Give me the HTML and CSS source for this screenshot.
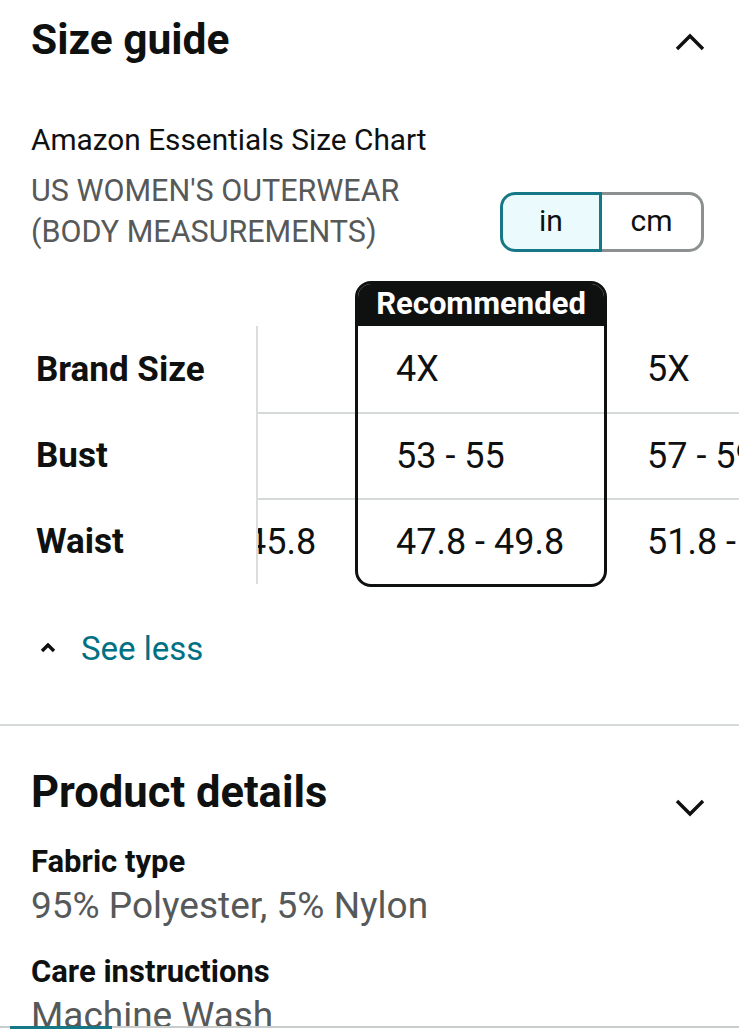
FILE: index.html
```html
<!DOCTYPE html>
<html lang="en">
  <head>
    <meta charset="UTF-8" />
    <meta name="viewport" content="width=device-width, initial-scale=1.0" />
    <title>Size guide</title>
    <link rel="stylesheet" href="styles.css">
  </head>
  <body>
    <section class="panel size-guide">
      <div class="panel-head">
        <h2>Size guide</h2>
        <svg class="chevron" viewBox="0 0 32 20" width="32" height="20">
          <polyline points="3,17 16,4 29,17" />
        </svg>
      </div>

      <div class="chart-title">Amazon Essentials Size Chart</div>
      <div class="chart-meta">
        <div class="chart-type">US WOMEN'S OUTERWEAR<br />(BODY MEASUREMENTS)</div>
        <div class="unit-toggle">
          <button class="unit active">in</button>
          <button class="unit">cm</button>
        </div>
      </div>

      <div class="chart">
        <div class="chart-labels">
          <div class="label-rows">
            <div class="label">Brand Size</div>
            <div class="label">Bust</div>
            <div class="label">Waist</div>
          </div>
        </div>
        <div class="chart-scroll">
          <div class="chart-track">
            <div class="col">
              <div class="col-head"></div>
              <div class="cell"></div>
              <div class="cell"></div>
              <div class="cell">43.8 - 45.8</div>
            </div>
            <div class="col recommended">
              <div class="col-head">Recommended</div>
              <div class="cell">4X</div>
              <div class="cell">53 - 55</div>
              <div class="cell">47.8 - 49.8</div>
            </div>
            <div class="col">
              <div class="col-head"></div>
              <div class="cell">5X</div>
              <div class="cell">57 - 59</div>
              <div class="cell">51.8 - 53.8</div>
            </div>
          </div>
        </div>
      </div>

      <a class="see-less" href="#">
        <svg viewBox="0 0 16 10" width="16" height="10">
          <polyline points="2,8 8,2 14,8" />
        </svg>
        See less
      </a>
    </section>

    <section class="panel details">
      <div class="panel-head">
        <h2>Product details</h2>
        <svg class="chevron down" viewBox="0 0 32 20" width="32" height="20">
          <polyline points="3,3 16,16 29,3" />
        </svg>
      </div>
      <dl class="facts">
        <dt>Fabric type</dt>
        <dd>95% Polyester, 5% Nylon</dd>
        <dt>Care instructions</dt>
        <dd>Machine Wash</dd>
      </dl>
    </section>

    <div class="bottom-bar"><span></span></div>
  </body>
</html>
```
FILE: styles.css
```css
body {
  margin: 0;
  background: #ffffff;
  color: #0f1111;
  font-family: Roboto, "Noto Sans", sans-serif;
  overflow: hidden;
}

.panel {
  padding: 0 31px;
}

.size-guide {
  padding-top: 15px;
  padding-bottom: 55px;
  border-bottom: 2px solid #d5d9d9;
}

.panel-head {
  display: flex;
  justify-content: space-between;
  align-items: center;
}

.panel-head h2 {
  margin: 0;
  font-size: 42.5px;
  line-height: 50px;
  font-weight: 700;
}

.details .panel-head h2 {
  font-size: 43.5px;
}

.chevron {
  margin-right: 2px;
  margin-top: 4px;
}

.chevron polyline,
.see-less polyline {
  fill: none;
  stroke: #0f1111;
  stroke-width: 3.4;
}

.chart-title {
  margin-top: 55px;
  font-size: 29.8px;
  line-height: 40px;
}

.chart-meta {
  margin-top: 10px;
  display: flex;
  justify-content: space-between;
  align-items: flex-end;
}

.chart-type {
  font-size: 30.5px;
  line-height: 41px;
  color: #565959;
}

.unit-toggle {
  display: flex;
  margin-right: 4px;
}

.unit {
  width: 102px;
  height: 60px;
  font-family: inherit;
  font-size: 30px;
  color: #0f1111;
  background: #ffffff;
  border: 3px solid #8d9090;
  border-left: none;
  border-radius: 0 15px 15px 0;
  padding: 0 0 4px;
}

.unit.active {
  background: #eafafd;
  border: 3px solid #167886;
  border-radius: 15px 0 0 15px;
}

.chart {
  display: flex;
  margin-top: 29px;
  margin-right: -31px;
  margin-left: -31px;
}

.chart-labels {
  width: 258px;
  flex-shrink: 0;
  padding-top: 45px;
}

.label-rows {
  border-right: 2px solid #dcdcdc;
  padding-left: 36px;
}

.label {
  height: 86px;
  display: flex;
  align-items: center;
  font-size: 35px;
  font-weight: 700;
}

.chart-scroll {
  flex: 1;
  overflow: hidden;
}

.chart-track {
  display: flex;
  margin-left: -155px;
}

.col {
  width: 252px;
  flex-shrink: 0;
  box-sizing: border-box;
}

.col-head {
  height: 45px;
}

.cell {
  height: 86px;
  display: flex;
  align-items: center;
  padding-left: 41px;
  font-size: 36px;
  white-space: nowrap;
  border-top: 2px solid #d5d9d9;
  box-sizing: border-box;
}

.col:first-child .cell {
  padding-left: 45px;
}

.col:last-child .cell {
  padding-left: 40px;
}

.col-head + .cell {
  border-top: none;
}

.recommended {
  border: 3px solid #0f1111;
  border-radius: 16px;
  overflow: hidden;
}

.recommended .col-head {
  height: 42px;
  background: #0f1111;
  color: #ffffff;
  font-size: 31px;
  font-weight: 700;
  line-height: 40px;
  text-align: center;
}

.recommended .cell {
  padding-left: 38px;
}

.see-less {
  display: flex;
  align-items: center;
  gap: 25px;
  margin-top: 40px;
  margin-left: 9px;
  height: 42px;
  font-size: 33px;
  color: #007185;
  text-decoration: none;
}

.details {
  padding-top: 42px;
}

.details .panel-head {
  align-items: flex-start;
}

.chevron.down {
  margin-top: 30px;
}

.facts {
  margin: 24px 0 0;
}

.facts dt {
  font-size: 31px;
  font-weight: 700;
  line-height: 40px;
}

.facts dd {
  margin: 0 0 22px;
  font-size: 37px;
  line-height: 48px;
  color: #565959;
}

.bottom-bar {
  position: fixed;
  left: 0;
  right: 0;
  bottom: 0;
  height: 3px;
  background: #ffffff;
  border-top: 2px solid #c9cccc;
}

.bottom-bar span {
  display: block;
  width: 102px;
  height: 3px;
  margin-left: 10px;
  margin-top: -2px;
  background: #167886;
}
```
